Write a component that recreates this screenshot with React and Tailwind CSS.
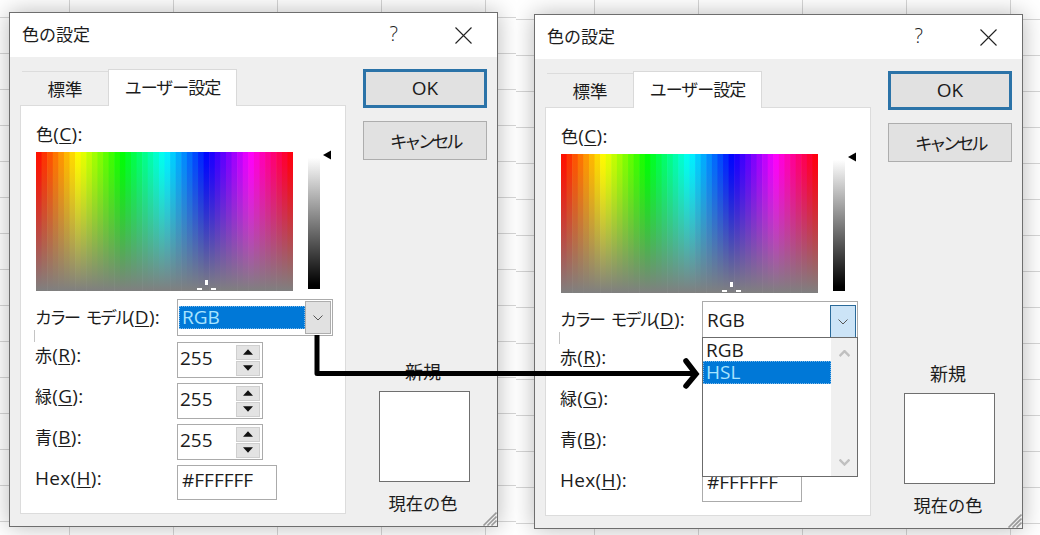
import React from "react";

function Picker({ id }) {
  const cols = 46;
  const w = 257;
  const h = 139;
  const defs = [];
  const bars = [];
  for (let c = 0; c < cols; c++) {
    const hue = ((c + 0.5) / cols) * 360;
    const stops = [];
    for (let i = 0; i <= 10; i++) {
      const t = i / 10;
      const sat = 100 * (1 - Math.pow(t, 1.25));
      stops.push(<stop key={i} offset={t} stopColor={`hsl(${hue},${sat}%,50%)`} />);
    }
    const gid = id + "-g" + c;
    defs.push(
      <linearGradient key={gid} id={gid} x1="0" y1="0" x2="0" y2="1">
        {stops}
      </linearGradient>
    );
    bars.push(<rect key={c} x={(c * w) / cols} y="0" width={w / cols + 0.6} height={h} fill={`url(#${gid})`} />);
  }
  return (
    <svg width={w} height={h} viewBox={`0 0 ${w} ${h}`} className="block shrink-0">
      <defs>{defs}</defs>
      {bars}
      <rect x="169" y="128" width="3" height="5" fill="#fff" />
      <rect x="161" y="136" width="5" height="2" fill="#fff" />
      <rect x="175" y="136" width="5" height="2" fill="#fff" />
    </svg>
  );
}

function Chevron({ className = "", up = false, color = "#555", w = 10, sw = 1 }) {
  return (
    <svg width={w} height={w * 0.6} viewBox="0 0 10 6" className={className}>
      <path d={up ? "M0.5 5.5 5 1l4.5 4.5" : "M0.5 0.5 5 5l4.5-4.5"} fill="none" stroke={color} strokeWidth={sw} />
    </svg>
  );
}

function Spin({ value }) {
  return (
    <div className="flex h-full w-[86px] items-center justify-between border border-[#ababab] bg-white pl-[2px] pr-[2px]">
      <span className="pb-[4px] text-[19px]">{value}</span>
      <div className="flex h-[31px] w-[24px] flex-col gap-px">
        <div className="flex flex-1 items-center justify-center border border-[#cfcfcf] bg-[#e3e3e3]">
          <svg width="10" height="6" viewBox="0 0 9 5"><path d="M0 5 4.5 0 9 5z" fill="#111" /></svg>
        </div>
        <div className="flex flex-1 items-center justify-center border border-[#cfcfcf] bg-[#e3e3e3]">
          <svg width="10" height="6" viewBox="0 0 9 5"><path d="M0 0 4.5 5 9 0z" fill="#111" /></svg>
        </div>
      </div>
    </div>
  );
}

function Label({ pre, u, kana = false, latin = false, lift = true }) {
  const preClass = kana
    ? "text-[17px] tracking-[-2.5px] [word-spacing:5px]"
    : latin
    ? ""
    : "text-[17px]";
  return (
    <span className={"-ml-px w-[142px] shrink-0 text-[19px] leading-[22px] tracking-[0.3px] " + (lift ? "pb-[10px]" : "pb-[1px]")}>
      <span className={preClass}>{pre}</span>(<span className="underline underline-offset-2">{u}</span>):
    </span>
  );
}

function Dialog({ className, open, id }) {
  return (
    <div className={"absolute flex h-[515px] w-[489px] flex-col border border-[#6e6e6e] bg-[#efefef] text-[#1c1c1c] shadow-[0_0_22px_rgba(0,0,0,0.28)] " + className}>
      <div className="flex h-[44px] shrink-0 items-center bg-white pl-3 pr-[25px]">
        <span className="text-[17px]">色の設定</span>
        <span className="mb-[2px] ml-auto text-[20px] font-light leading-none text-[#222]">?</span>
        <svg width="17" height="17" viewBox="0 0 17 17" className="ml-[57px]">
          <path d="M0.5 0.5 16.5 16.5M16.5 0.5 0.5 16.5" stroke="#222" strokeWidth="1.1" fill="none" />
        </svg>
      </div>

      <div className="flex flex-1 pl-[10px] pt-3">
        <div className="w-[326px]">
          <div className="relative z-10 -mb-px flex h-[37px] pl-[2px]">
            <div className="mt-[2px] flex w-[86px] items-center justify-center border-t border-[#dcdcdc] text-[17.5px]">標準</div>
            <div className="flex w-[129px] items-center justify-center border border-b-0 border-[#d9d9d9] bg-white text-[17px] tracking-[-1px]">ユーザー設定</div>
          </div>
          <div className="relative h-[409px] border border-[#dcdcdc] bg-white pl-[15px] pt-[18px]">
            <div className="mb-[8px] h-[20px] text-[19px] leading-[20px] tracking-[0.3px]">
              <span className="text-[17px]">色</span>(<span className="underline underline-offset-2">C</span>):
            </div>
            <div className="flex">
              <Picker id={id} />
              <div className="ml-[15px] mt-[3px] h-[134px] w-[12px] bg-[linear-gradient(to_bottom,#ffffff_2%,#000000_97%)]" />
              <svg width="8" height="10" viewBox="0 0 8 9" className="ml-[3px] mt-[-2px]">
                <path d="M0 4.5 8 0v9z" fill="#000" />
              </svg>
            </div>

            <div className="mt-[8px] flex h-[37px] items-center">
              <Label pre="カラー モデル" u="D" kana lift={false} />
              <div className="relative flex h-full w-[156px] items-center border border-[#ababab] bg-white">
                {open ? (
                  <span className="pl-[4px] text-[19px] leading-[24px]">RGB</span>
                ) : (
                  <div className="ml-px flex h-[23px] w-[126px] items-center border border-dotted border-[#7fb8e6] bg-[#0078d7] pl-[2px] text-[19px] text-[#a8e4ff]">RGB</div>
                )}
                {open ? (
                  <div className="absolute right-px top-[3px] flex h-[33px] w-[26px] items-center justify-center border border-[#2a6a9a] bg-[#cce4f7]">
                    <Chevron />
                  </div>
                ) : (
                  <div className="absolute right-px top-px flex h-[33px] w-[26px] items-center justify-center border border-[#adadad] bg-[#e1e1e1]">
                    <Chevron />
                  </div>
                )}
              </div>
            </div>

            <div className="mt-[6px] flex h-[36px] items-center">
              <Label pre="赤" u="R" />
              <Spin value="255" />
            </div>
            <div className="mt-[5px] flex h-[36px] items-center">
              <Label pre="緑" u="G" />
              <Spin value="255" />
            </div>
            <div className="mt-[5px] flex h-[36px] items-center">
              <Label pre="青" u="B" />
              <Spin value="255" />
            </div>
            <div className="mt-[5px] flex h-[35px] items-center">
              <Label pre="Hex" u="H" latin />
              <div className="flex h-full w-[100px] items-center border border-[#ababab] bg-white pb-[4px] pl-[4px] text-[19px]">#FFFFFF</div>
            </div>

            <div className="absolute left-[13px] top-[224px] h-[12px] w-px bg-[#c4c4c4]" />
          </div>
        </div>

        <div className="ml-[17px] flex w-[124px] flex-col items-center">
          <div className="flex h-[39px] w-full items-center justify-center border-[3px] border-[#2b73a8] bg-[#e1e1e1] text-[19px]">OK</div>
          <div className="mt-[13px] flex h-[39px] w-full items-center justify-center border border-[#adadad] bg-[#e1e1e1] pt-[2px] text-[17.5px] tracking-[-3.5px]">キャンセル</div>
          <div className="mr-[4px] mt-[202px] h-[20px] text-[18px] leading-[20px]">新規</div>
          <div className="mr-px mt-[9px] h-[91px] w-[91px] border border-[#6f6f6f] bg-white" />
          <div className="mr-[4px] mt-[12px] h-[20px] text-[17.25px] leading-[20px]">現在の色</div>
        </div>
      </div>

      {open && (
        <div className="absolute left-[167px] top-[322px] z-20 flex h-[140px] w-[156px] border border-[#6b6b6b] bg-white">
          <div className="flex-1">
            <div className="flex h-[23px] items-center pl-[3px] pt-[2px] text-[19px]">RGB</div>
            <div className="flex h-[23px] items-center border border-dotted border-[#7fb8e6] bg-[#0078d7] pl-[2px] text-[19px] text-[#a8e4ff]">HSL</div>
          </div>
          <div className="flex w-[26px] flex-col items-center justify-between bg-[#f0f0f0] pb-[10px] pt-[12px]">
            <Chevron up color="#c0c0c0" w={11} sw={2.2} />
            <Chevron color="#c0c0c0" w={11} sw={2.2} />
          </div>
        </div>
      )}

      <svg width="15" height="15" viewBox="0 0 15 15" className="absolute bottom-0 right-0">
        <path d="M14.5 1.5 1.5 14.5M14.5 5.5 5.5 14.5M14.5 9.5 9.5 14.5" stroke="#9a9a9a" strokeWidth="1.6" fill="none" />
      </svg>
    </div>
  );
}

export default function App() {
  return (
    <div className="relative flex h-[535px] w-[1040px] overflow-hidden bg-white font-['Open_Sans','Noto_Sans_CJK_JP',sans-serif]">
      <div className="relative h-full w-[516px] overflow-hidden bg-white bg-[linear-gradient(#d6d6d6_1px,transparent_1px),linear-gradient(90deg,#d6d6d6_1px,transparent_1px)] bg-[length:104px_36px] bg-[position:69px_17px]">
        <Dialog id="a" className="left-[9px] top-[12px]" />
      </div>
      <div className="relative h-full w-[524px] overflow-hidden bg-white bg-[linear-gradient(#d6d6d6_1px,transparent_1px),linear-gradient(90deg,#d6d6d6_1px,transparent_1px)] bg-[length:104px_36px] bg-[position:78px_19px]">
        <Dialog id="b" className="left-[18px] top-[14px]" open />
      </div>
      <svg width="1040" height="535" viewBox="0 0 1040 535" className="pointer-events-none absolute left-0 top-0 z-30">
        <path d="M317 335V373.5H694" fill="none" stroke="#000" strokeWidth="5" strokeLinejoin="round" />
        <path d="M686 361 696 374 686 386" fill="none" stroke="#000" strokeWidth="5.5" strokeLinecap="round" strokeLinejoin="miter" />
      </svg>
    </div>
  );
}
